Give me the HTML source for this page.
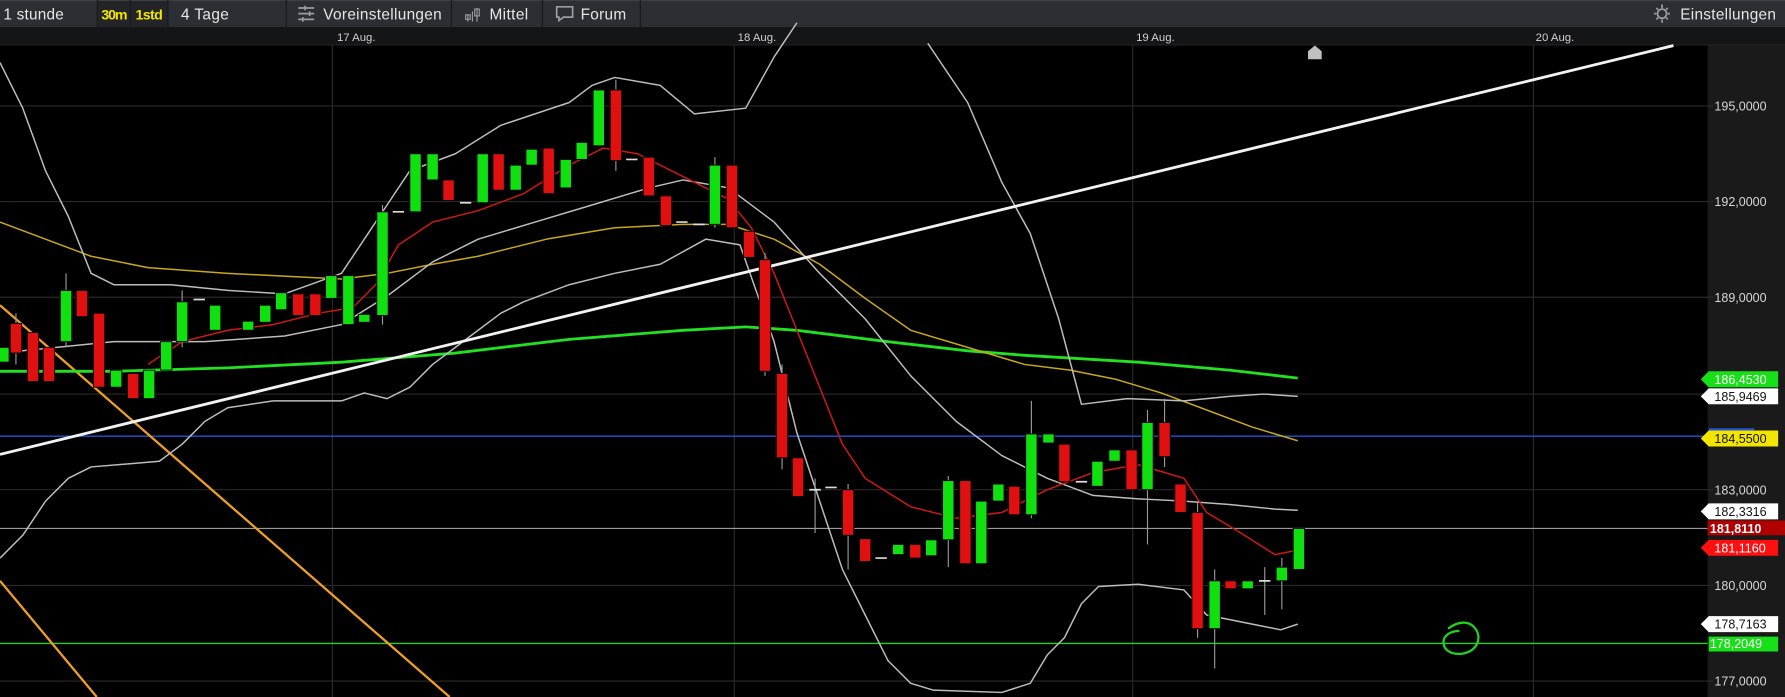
<!DOCTYPE html>
<html><head><meta charset="utf-8"><style>
html,body{margin:0;padding:0;background:#000;overflow:hidden}
svg{display:block}
text{font-family:"Liberation Sans",sans-serif}
</style></head><body>
<svg width="1785" height="697" viewBox="0 0 1568 612" preserveAspectRatio="none" xmlns="http://www.w3.org/2000/svg">
<rect width="1568" height="612" fill="#000"/>
<!-- toolbar -->
<rect x="0" y="0" width="1568" height="24" fill="#2b2e32"/>
<rect x="0" y="0" width="1568" height="1" fill="#3c4045"/>
<rect x="86" y="1" width="28" height="23" fill="#222427"/>
<rect x="115" y="1" width="32" height="23" fill="#222427"/>
<g fill="#17191b">
<rect x="85" y="0" width="1" height="24"/><rect x="114" y="0" width="1" height="24"/><rect x="147" y="0" width="1" height="24"/>
<rect x="251" y="0" width="1" height="24"/><rect x="396" y="0" width="1" height="24"/><rect x="476" y="0" width="1" height="24"/><rect x="562" y="0" width="1" height="24"/>
</g>
<g font-size="13.5" fill="#e6e6e6">
<text x="3" y="17" textLength="53">1 stunde</text>
<text x="89" y="17" fill="#f2e600" font-weight="bold" font-size="12.5" textLength="23">30m</text>
<text x="119" y="17" fill="#f2e600" font-weight="bold" font-size="12.5" textLength="24">1std</text>
<text x="159" y="17" textLength="42">4 Tage</text>
<text x="284" y="17" textLength="104">Voreinstellungen</text>
<text x="430" y="17" textLength="34">Mittel</text>
<text x="510" y="17" textLength="40">Forum</text>
<text x="1476" y="17" textLength="84">Einstellungen</text>
</g>
<g stroke="#9a9ea3" stroke-width="1.5" fill="none">
<path d="M262 7h14M262 12h14M262 17h14M268 5v4M272 10v4M266 15v4"/>
<path d="M411 19v-6M415 19v-9M419 19v-12M409 13h4v4h-4zM417 8h4v6h-4z" stroke-width="1"/>
<path d="M489 6h14v9h-8l-4 3v-3h-2z"/>
<circle cx="1460" cy="12" r="4"/><path d="M1460 4v3M1460 17v3M1453 12h2M1465 12h2M1455 7l1.5 1.5M1465 7l-1.5 1.5M1455 17l1.5-1.5M1465 17l-1.5-1.5"/>
</g>
<!-- date axis -->
<rect x="0" y="24" width="1568" height="16" fill="#141516"/>
<rect x="0" y="39" width="1568" height="1" fill="#222"/>
<g font-size="10" fill="#cfcfcf">
<text x="296" y="36">17 Aug.</text><text x="648" y="36">18 Aug.</text><text x="998" y="36">19 Aug.</text><text x="1349" y="36">20 Aug.</text>
</g>
<!-- right axis -->
<rect x="1500" y="40" width="68" height="572" fill="#1a1a1a"/>
<!-- grid -->
<g stroke="#2a2a2a" stroke-width="1">
<path d="M0 93H1505M0 177H1505M0 261H1505M0 346H1505M0 430H1505M0 514H1505M0 598H1505"/>
<path d="M292 40V612M645 40V612M995 40V612M1347 40V612"/>
</g>
<g font-size="11" fill="#d8d8d8">
<text x="1506" y="97">195,0000</text><text x="1506" y="181">192,0000</text><text x="1506" y="265">189,0000</text>
<text x="1506" y="434">183,0000</text><text x="1506" y="518">180,0000</text><text x="1506" y="602">177,0000</text>
</g>
<!-- horizontal lines -->
<path d="M0 383H1500" stroke="#2453d8" stroke-width="1.2"/>
<path d="M0 464H1500" stroke="#9a9a9a" stroke-width="1"/>
<path d="M0 565H1500" stroke="#22d022" stroke-width="1.2"/>
<!-- orange lines -->
<path d="M0 268L395 612M0 510L85 612" stroke="#f0a020" stroke-width="2" fill="none"/>
<!-- indicator lines -->
<g fill="none" stroke-linejoin="round">
<polyline stroke="#22e022" stroke-width="2.5" points="0,326 100,326 200,323 300,318 400,310 500,298 600,290 655,287 700,290 780,300 850,308 900,312 1000,318 1080,325 1140,332"/>
<polyline stroke="#c8a81a" stroke-width="1.3" points="0,195 40,210 80,225 130,235 200,240 260,243 300,245 340,240 380,232 420,225 480,210 540,200 600,197 640,197 680,210 720,232 760,262 800,290 850,305 900,320 940,325 980,333 1020,345 1060,360 1100,375 1140,387"/>
<polyline stroke="#bdbdbd" stroke-width="1.3" points="0,55 20,95 40,150 60,190 80,240 100,250 150,250 200,255 250,258 300,240 320,210 340,180 360,150 400,135 440,110 470,100 500,90 520,75 540,68 580,75 610,100 655,95 680,50 700,20"/>
<polyline stroke="#bdbdbd" stroke-width="1.3" points="815,38 850,90 880,160 905,205 930,280 950,355 990,350 1040,352 1080,348 1110,346 1140,348"/>
<polyline stroke="#bdbdbd" stroke-width="1.3" points="0,490 20,470 40,440 60,420 80,410 140,405 160,390 180,370 200,358 240,352 300,352 320,345 340,350 360,340 380,320 400,305 420,290 440,275 460,265 500,250 540,240 580,232 620,210 650,215 680,300 700,380 720,440 740,500 760,540 780,580 800,600 820,606 880,608 905,600 920,575 935,560 950,530 965,515 1000,513 1040,518 1060,540 1100,548 1125,553 1140,548"/>
<polyline stroke="#bdbdbd" stroke-width="1.3" points="0,310 100,300 180,300 250,295 300,285 340,260 380,230 420,210 470,195 520,180 570,165 600,158 640,165 680,195 720,240 760,280 800,330 840,370 880,400 920,420 960,435 1000,438 1040,440 1080,443 1120,447 1140,448"/>
<polyline stroke="#d01818" stroke-width="1.3" points="130,320 160,300 200,290 240,285 280,275 310,270 330,250 350,215 380,195 420,185 460,170 500,145 530,130 560,135 600,155 640,175 660,200 680,240 700,290 720,340 740,390 760,420 800,445 840,455 880,450 920,430 960,415 1000,408 1040,420 1060,450 1090,468 1120,487 1140,483"/>
</g>
<!-- trend line -->
<path d="M0 399L1470 40" stroke="#f2f2f2" stroke-width="2.5"/>
<!-- candles -->
<g stroke="#999" stroke-width="1">
<path d="M14 275V320M58 240V305M160 255V305M336 180V285M541 70V150M628 138V200M672 222V330M687 320V412M716 420V468M745 425V500M833 418V498M906 352V455M1008 360V478M1023 350V410M1052 440V560M1067 500V587M1111 498V540M1126 490V535"/>
</g>
<g stroke="#000" stroke-width="0.8">
<g fill="#e01010">
<rect x="9" y="284" width="10" height="26"/><rect x="24" y="292" width="10" height="43"/><rect x="38" y="305" width="10" height="30"/>
<rect x="67" y="255" width="10" height="23"/><rect x="82" y="275" width="10" height="65"/><rect x="112" y="328" width="10" height="22"/>
<rect x="257" y="258" width="10" height="19"/><rect x="272" y="258" width="10" height="19"/>
<rect x="389" y="158" width="10" height="18"/><rect x="433" y="135" width="10" height="32"/><rect x="477" y="130" width="10" height="40"/>
<rect x="536" y="79" width="10" height="62"/><rect x="565" y="138" width="10" height="34"/><rect x="580" y="172" width="10" height="26"/>
<rect x="638" y="145" width="10" height="55"/><rect x="653" y="203" width="10" height="23"/><rect x="667" y="228" width="10" height="98"/>
<rect x="682" y="328" width="10" height="74"/><rect x="696" y="402" width="10" height="34"/><rect x="740" y="430" width="10" height="40"/>
<rect x="755" y="473" width="10" height="20"/><rect x="799" y="478" width="10" height="12"/><rect x="843" y="422" width="10" height="73"/>
<rect x="886" y="427" width="10" height="25"/><rect x="930" y="390" width="10" height="33"/><rect x="989" y="395" width="10" height="35"/>
<rect x="1018" y="371" width="10" height="30"/><rect x="1032" y="425" width="10" height="25"/><rect x="1047" y="450" width="10" height="102"/>
<rect x="1076" y="510" width="10" height="7"/>
</g>
<g fill="#10e010">
<rect x="-2" y="305" width="10" height="13"/><rect x="53" y="255" width="10" height="45"/><rect x="97" y="325" width="10" height="15"/>
<rect x="126" y="325" width="10" height="25"/><rect x="141" y="300" width="10" height="25"/><rect x="155" y="265" width="10" height="35"/>
<rect x="184" y="268" width="10" height="22"/><rect x="213" y="282" width="10" height="8"/><rect x="228" y="268" width="10" height="15"/>
<rect x="242" y="257" width="10" height="15"/><rect x="286" y="242" width="10" height="20"/><rect x="301" y="242" width="10" height="43"/>
<rect x="315" y="276" width="10" height="7"/><rect x="331" y="186" width="10" height="91"/><rect x="360" y="135" width="10" height="51"/>
<rect x="375" y="135" width="10" height="23"/><rect x="419" y="135" width="10" height="43"/><rect x="448" y="145" width="10" height="22"/>
<rect x="462" y="131" width="10" height="14"/><rect x="492" y="140" width="10" height="25"/><rect x="506" y="125" width="10" height="15"/>
<rect x="521" y="79" width="10" height="49"/><rect x="623" y="145" width="10" height="52"/><rect x="784" y="478" width="10" height="9"/>
<rect x="813" y="474" width="10" height="14"/><rect x="828" y="422" width="10" height="52"/><rect x="857" y="440" width="10" height="55"/>
<rect x="872" y="425" width="10" height="15"/><rect x="901" y="381" width="10" height="71"/><rect x="916" y="381" width="10" height="8"/>
<rect x="959" y="405" width="10" height="22"/><rect x="974" y="395" width="10" height="10"/><rect x="1003" y="371" width="10" height="59"/>
<rect x="1062" y="510" width="10" height="42"/><rect x="1091" y="510" width="10" height="7"/><rect x="1121" y="498" width="10" height="12"/>
<rect x="1136" y="464" width="10" height="36"/>
</g>
<g stroke="#ddd" stroke-width="1.5">
<path d="M170 263h10M345 186h10M404 178h10M550 140h10M594 195h10M609 197h10M711 430h10M725 428h10M769 490h10M945 423h10M1106 510h10"/>
</g>
</g>
<!-- marker -->
<path d="M1149 52V45l6-5 6 5v7z" fill="#c0c0c0"/>
<!-- green scribble -->
<path d="M1272 552c8-6 18-8 24 0 6 8 2 20-12 22-10 1-16-4-16-10 0-6 6-10 14-10" fill="none" stroke="#22d022" stroke-width="2"/>
<!-- right labels -->
<g font-size="11">
<path d="M1494 333l7-7h61v14h-61z" fill="#18e018"/><text x="1506" y="337" fill="#fff">186,4530</text>
<path d="M1494 348l7-7h61v14h-61z" fill="#fff"/><text x="1506" y="352" fill="#111">185,9469</text>
<path d="M1501 376h40v2h-40z" fill="#2453d8"/>
<path d="M1494 385l7-7h61v14h-61z" fill="#f2e600"/><text x="1506" y="389" fill="#111">184,5500</text>
<path d="M1494 449l7-7h61v14h-61z" fill="#fff"/><text x="1506" y="453" fill="#111">182,3316</text>
<path d="M1500 457h68v13h-68z" fill="#b00000"/><text x="1502" y="468" fill="#fff" font-weight="bold">181,8110</text>
<path d="M1494 481l7-7h61v14h-61z" fill="#ff1010"/><text x="1506" y="485" fill="#fff">181,1160</text>
<path d="M1494 548l7-7h61v14h-61z" fill="#fff"/><text x="1506" y="552" fill="#111">178,7163</text>
<path d="M1501 559h61v13h-61z" fill="#18e018"/><text x="1502" y="569" fill="#fff">178,2049</text>
</g>
</svg>
</body></html>
